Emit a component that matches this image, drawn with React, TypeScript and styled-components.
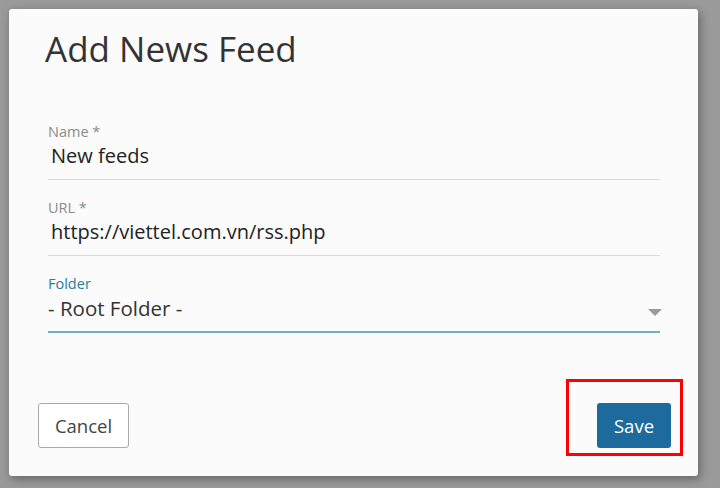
import React from 'react';
import styled, { createGlobalStyle } from 'styled-components';

const GlobalStyle = createGlobalStyle`
    html, body {
        margin: 0;
        padding: 0;
        background: #9a9a9a;
        font-family: "Open Sans", "Noto Sans", sans-serif;
    }
`

const Backdrop = styled.div`
    width: 720px;
    height: 488px;
    padding: 9px 22px 12px 9px;
    box-sizing: border-box;
    background: #9a9a9a;
`

const Dialog = styled.div`
    width: 689px;
    height: 467px;
    box-sizing: border-box;
    background: #fbfbfb;
    border-radius: 3px;
    box-shadow: 2px 3px 10px rgba(0, 0, 0, 0.35);
    display: flex;
    flex-direction: column;
    padding: 18px 38px 28px 39px;
`

const Title = styled.h1`
    margin: 0 0 0 -3px;
    font-size: 35px;
    line-height: 44px;
    font-weight: 400;
    color: #333;
`

const Form = styled.div`
    display: flex;
    flex-direction: column;
    margin-top: 53px;
    gap: 20px;
`

const Field = styled.div<{ $active?: boolean }>`
    position: relative;
    display: flex;
    flex-direction: column;
    border-bottom: ${p => (p.$active ? '2px solid #76adbf' : '1px solid #d9d9d9')};
    padding-bottom: 10px;
`

const Label = styled.label<{ $active?: boolean }>`
    font-size: 14.5px;
    line-height: 16px;
    color: ${p => (p.$active ? '#2a7d9c' : '#8a8a8a')};
`

const Value = styled.div`
    font-size: 20px;
    line-height: 26px;
    color: #222;
    padding: 3px 0 0 3px;
`

const SelectValue = styled(Value)`
    padding-left: 0;
    font-size: 20.5px;
    color: #333;
`

const Caret = styled.span`
    position: absolute;
    right: -2px;
    bottom: 15px;
    width: 0;
    height: 0;
    border-left: 7px solid transparent;
    border-right: 7px solid transparent;
    border-top: 7px solid #9a9a9a;
`

const Footer = styled.div`
    margin-top: auto;
    margin-left: -10px;
    margin-right: -11px;
    display: flex;
    justify-content: space-between;
    align-items: flex-end;
`

const Button = styled.button<{ $primary?: boolean }>`
    height: 45px;
    padding: 0;
    border-radius: 3px;
    font-family: "Open Sans", "Noto Sans", sans-serif;
    font-size: 18.5px;
    cursor: pointer;
    border: ${p => (p.$primary ? 'none' : '1px solid #a9a9a9')};
    background: ${p => (p.$primary ? '#1d6a9c' : '#fff')};
    color: ${p => (p.$primary ? '#fff' : '#444')};
    width: ${p => (p.$primary ? '74px' : '91px')};
`

const Highlight = styled.div`
    position: relative;
`

const RedFrame = styled.span`
    position: absolute;
    left: -31px;
    right: -12px;
    top: -24px;
    bottom: -8px;
    border: 3px solid #f00;
    pointer-events: none;
`

const App: React.FC = () => {
    return (
        <Backdrop>
            <GlobalStyle />
            <Dialog>
                <Title>Add News Feed</Title>
                <Form>
                    <Field>
                        <Label>Name *</Label>
                        <Value>New feeds</Value>
                    </Field>
                    <Field>
                        <Label>URL *</Label>
                        <Value>https://viettel.com.vn/rss.php</Value>
                    </Field>
                    <Field $active>
                        <Label $active>Folder</Label>
                        <SelectValue>- Root Folder -</SelectValue>
                        <Caret />
                    </Field>
                </Form>
                <Footer>
                    <Button>Cancel</Button>
                    <Highlight>
                        <Button $primary>Save</Button>
                        <RedFrame />
                    </Highlight>
                </Footer>
            </Dialog>
        </Backdrop>
    )
}

export default App;
